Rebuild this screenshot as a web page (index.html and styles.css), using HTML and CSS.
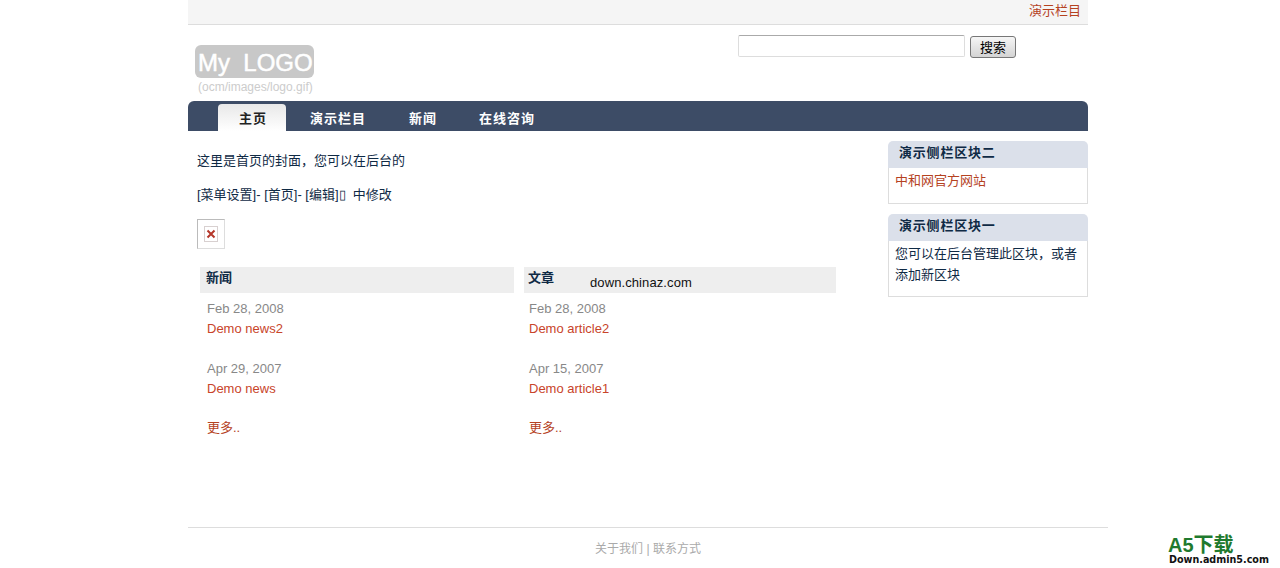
FILE: index.html
```html
<!DOCTYPE html>
<html>
<head>
  <title>主页</title>
  <meta charset="utf-8">
  <link rel="stylesheet" href="styles.css">
</head>

<body>
  <div class="page">
    <div class="topbar"><a href="#">演示栏目</a></div>

    <div class="header">
      <div class="logo">
        <div class="logo_box">My&nbsp; LOGO</div>
        <div class="logo_path">(ocm/images/logo.gif)</div>
      </div>
      <form class="search">
        <input class="search_input" type="text">
        <button class="search_btn" type="button">搜索</button>
      </form>
    </div>

    <div class="nav">
      <a class="nav_item active" href="#">主页</a>
      <a class="nav_item" href="#">演示栏目</a>
      <a class="nav_item" href="#">新闻</a>
      <a class="nav_item" href="#">在线咨询</a>
    </div>

    <div class="columns">
      <div class="main">
        <p class="intro">这里是首页的封面，您可以在后台的</p>
        <p class="intro">[菜单设置]- [首页]- [编辑]▯&nbsp; 中修改</p>
        <div class="broken">
          <svg width="14" height="16" viewBox="0 0 14 16">
            <rect x="0.5" y="0.5" width="13" height="15" fill="#fff" stroke="#d8d0d0"/>
            <path d="M3.5 4.5l7 7M10.5 4.5l-7 7" stroke="#b5372a" stroke-width="2" fill="none"/>
          </svg>
        </div>

        <div class="lists">
          <div class="list">
            <h3 class="list_title first">新闻</h3>
            <div class="entry">
              <div class="entry_date">Feb 28, 2008</div>
              <a class="entry_link" href="#">Demo news2</a>
            </div>
            <div class="entry">
              <div class="entry_date">Apr 29, 2007</div>
              <a class="entry_link" href="#">Demo news</a>
            </div>
            <a class="more" href="#">更多..</a>
          </div>
          <div class="list">
            <h3 class="list_title">文章</h3>
            <span class="stamp">down.chinaz.com</span>
            <div class="entry">
              <div class="entry_date">Feb 28, 2008</div>
              <a class="entry_link" href="#">Demo article2</a>
            </div>
            <div class="entry">
              <div class="entry_date">Apr 15, 2007</div>
              <a class="entry_link" href="#">Demo article1</a>
            </div>
            <a class="more" href="#">更多..</a>
          </div>
        </div>
      </div>

      <div class="side">
        <div class="block">
          <h3 class="block_title">演示侧栏区块二</h3>
          <div class="block_body block_short"><a href="#">中和网官方网站</a></div>
        </div>
        <div class="block">
          <h3 class="block_title">演示侧栏区块一</h3>
          <div class="block_body">您可以在后台管理此区块，或者添加新区块</div>
        </div>
      </div>
    </div>

    <div class="footer">关于我们 | 联系方式</div>
  </div>

  <div class="mark">
    <div class="mark_big">A5下载</div>
    <div class="mark_small">Down.admin5.com</div>
  </div>
</body>
</html>
```

FILE: styles.css
```css
html,
body {
  margin: 0;
  padding: 0;
  height: 100%;
  overflow: hidden;
  background: #fff;
  font-family: "Liberation Sans", "Noto Sans CJK SC", sans-serif;
  font-size: 13px;
  color: #0f2a45;
}

a {
  color: #b5421f;
  text-decoration: none;
}

.page {
  width: 920px;
  margin-left: 188px;
}

/* top strip */
.topbar {
  width: 893px;
  height: 24px;
  padding-right: 7px;
  line-height: 21px;
  text-align: right;
  background: #f5f5f5;
  border-bottom: 1px solid #ddd;
}

.header {
  width: 900px;
  height: 76px;
  display: flex;
  justify-content: space-between;
}

.logo {
  padding: 20px 0 0 7px;
}

.logo_box {
  width: 119px;
  height: 33px;
  line-height: 35px;
  padding-left: 3px;
  box-sizing: border-box;
  background: #c8c8c8;
  border-radius: 6px;
  color: #fff;
  font-size: 24px;
  -webkit-text-stroke: 0.5px #fff;
  white-space: nowrap;
}

.logo_path {
  margin: 2px 0 0 3px;
  font-size: 12px;
  line-height: 14px;
  color: #ccc;
}

.search {
  display: flex;
  align-items: flex-start;
  gap: 5px;
  padding: 10px 72px 0 0;
}

.search_input {
  width: 227px;
  height: 22px;
  box-sizing: border-box;
  margin: 0;
  border: 1px solid #ddd;
  border-top-color: #aaa;
  border-radius: 2px;
  background: #fff;
}

.search_btn {
  width: 46px;
  height: 22px;
  margin: 1px 0 0;
  padding: 0 0 4px;
  border: 1px solid #777;
  border-radius: 3px;
  background: linear-gradient(to bottom, #f6f6f6, #d4d4d4);
  font-family: inherit;
  font-size: 13px;
  color: #000;
}

.nav {
  width: 870px;
  height: 30px;
  padding-left: 30px;
  display: flex;
  background: #3d4c66;
  border-radius: 6px 6px 0 0;
}

.nav_item {
  height: 27px;
  margin-top: 3px;
  padding: 0 21px;
  line-height: 29px;
  font-weight: bold;
  color: #fff;
  letter-spacing: 1px;
  white-space: nowrap;
}

.nav_item.active {
  padding: 0 19px 0 21px;
  border-radius: 4px 4px 0 0;
  background: linear-gradient(to bottom, #e8e8e8, #fff);
  color: #222;
}

.nav_item:nth-child(2) {
  padding: 0 22px 0 24px;
}

.columns {
  width: 900px;
  display: flex;
  justify-content: space-between;
  padding-top: 10px;
}

.main {
  width: 641px;
  padding: 9px 0 0 9px;
}

.intro {
  margin: 0 0 14px;
  padding-top: 1px;
  line-height: 19px;
}

.broken {
  width: 26px;
  height: 28px;
  margin-top: 15px;
  display: flex;
  align-items: center;
  justify-content: center;
  border: 1px solid #ddd;
  border-top-color: #bbb;
  border-left-color: #bbb;
}

.lists {
  display: flex;
  gap: 10px;
  margin: 18px 0 0 5px;
}

.list {
  position: relative;
  width: 312px;
}

.list_title {
  height: 26px;
  margin: 0 0 6px;
  padding-left: 4px;
  line-height: 22px;
  font-size: 13px;
  background: #eee;
  color: #0f2a45;
}

.list_title.first {
  margin-left: -2px;
  padding-left: 6px;
}

.stamp {
  position: absolute;
  left: 66px;
  top: 8px;
  font-size: 13px;
  line-height: 16px;
  letter-spacing: 0.1px;
  color: #111;
}

.entry {
  padding-left: 5px;
  margin-bottom: 20px;
  line-height: 20px;
  font-size: 13px;
}

.entry_date {
  color: #888;
}

.entry_link {
  color: #c8442a;
}

.more {
  display: block;
  padding-left: 5px;
  line-height: 18px;
}

.side {
  width: 200px;
}

.block {
  margin-bottom: 10px;
}

.block_title {
  height: 27px;
  margin: 0;
  padding-left: 11px;
  line-height: 24px;
  font-size: 13px;
  letter-spacing: 0.8px;
  border-radius: 5px 5px 0 0;
  background: #dbe0ea;
  color: #0f2a45;
}

.block_body {
  padding: 2px 6px 11px;
  line-height: 21px;
  border: 1px solid #ddd;
  border-top: 0;
}

.block_short {
  padding-bottom: 12px;
}

.footer {
  width: 920px;
  margin-top: 90px;
  padding-top: 12px;
  text-align: center;
  font-size: 12px;
  line-height: 18px;
  color: #aaa;
  border-top: 1px solid #ddd;
}

/* watermark in the corner */
.mark {
  position: absolute;
  right: 10px;
  bottom: 3px;
  width: 101px;
  color: #111;
}

.mark_big {
  margin-left: -1px;
  font-size: 20px;
  line-height: 19px;
  font-weight: bold;
  color: #1f7a2e;
}

.mark_small {
  font-family: "DejaVu Sans", sans-serif;
  font-size: 9.6px;
  line-height: 10px;
  font-weight: bold;
  white-space: nowrap;
}
```
